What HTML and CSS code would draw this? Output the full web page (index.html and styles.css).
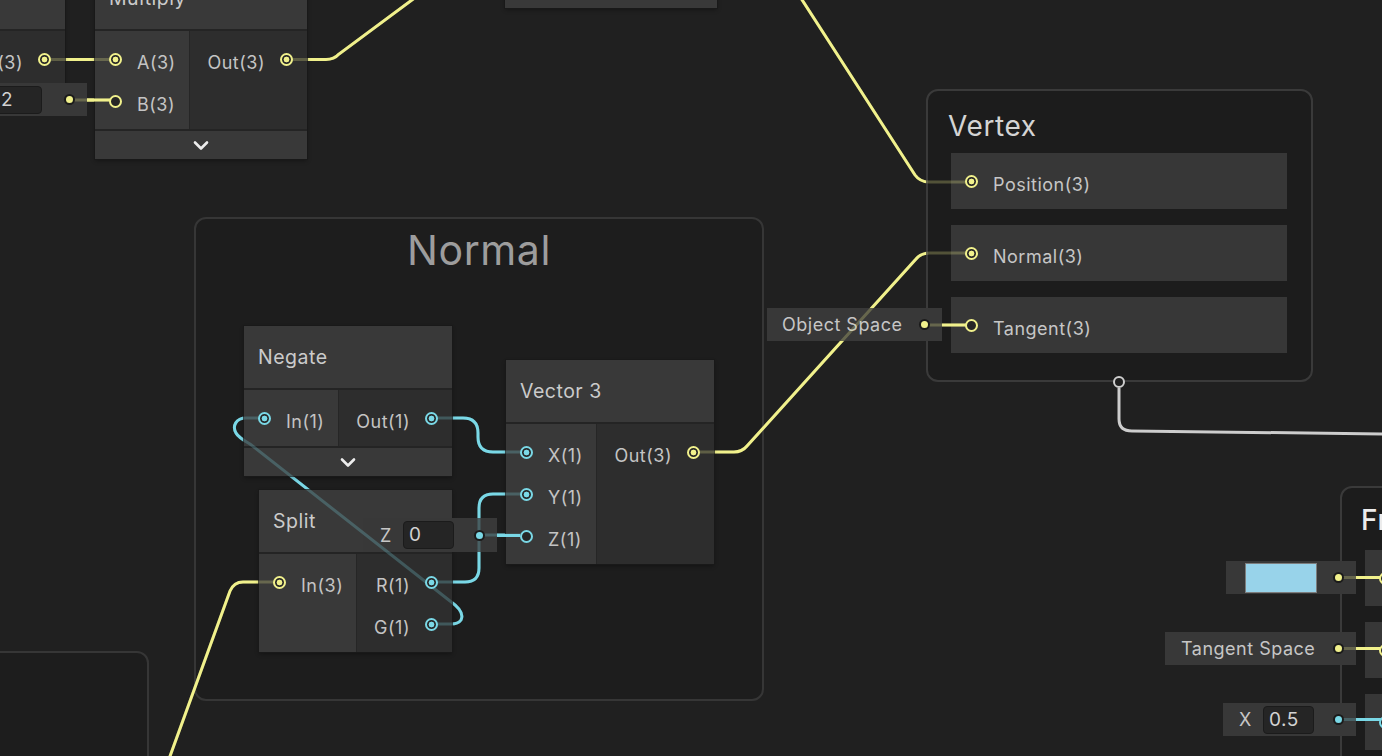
FILE: index.html
```html
<!DOCTYPE html>
<html>
<head>
<meta charset="utf-8">
<title>Shader Graph</title>
<link rel="stylesheet" href="styles.css">
</head>
<body>
<div class="graph">
  <div class="group g-normal"><div class="group-title">Normal</div></div>
  <div class="group g-bl"></div>

  <div class="context c-frag">
    <div class="ctx-title ctx-title-bright">Fragment</div>
    <div class="ctx-slot"><span class="port y on"></span></div>
    <div class="ctx-slot"><span class="port y on"></span></div>
    <div class="ctx-slot"><span class="port c on"></span></div>
  </div>

  <svg class="edges under" width="1382" height="756" viewBox="0 0 1382 756">
    <defs>
      <path id="p1" d="M44,59.5 H116"/>
      <path id="p2" d="M286,59.5 H326 Q334,59.5 339,54 L420,-6"/>
      <path id="p3" d="M797,-8 L915,175 Q920,182 929,182 H972"/>
      <path id="p4" d="M692,452 H734 Q742,452 747,446 L916,259 Q921,253 930,253 H972"/>
      <path id="p5" d="M925,325 H972"/>
      <path id="p6" d="M431,418 H463 Q478,418 478,433 V437 Q478,452 493,452 H526"/>
      <path id="p7" d="M431,582 H465 Q479,582 479,568 V508 Q479,494 493,494 H526"/>
      <path id="p8" d="M479,535 H526"/>
      <path id="p9" d="M264,418 H246 C236,418 232,426 236,433 C238,437 243,440 250,444 L450,601 C460,608 464,614 461,620 C459,623 456,624 451,624 H431"/>
      <path id="p10" d="M279,582 H243 Q234,582 230,591 L165,770"/>
      <path id="p11" d="M1119,388 V419 Q1119,431 1132,431 L1390,434"/>
      <path id="p12" d="M1339,577.5 H1386"/>
      <path id="p13" d="M1339,648.5 H1386"/>
      <path id="p14" d="M1339,719.5 H1386"/>
      <path id="p15" d="M68,100 H116"/>
    </defs>
    <g class="shadow">
      <use href="#p2"/><use href="#p3"/><use href="#p4"/><use href="#p6"/><use href="#p7"/>
      <use href="#p9"/><use href="#p10"/><use href="#p11"/>
    </g>
    <g class="ey"><use href="#p1"/><use href="#p2"/><use href="#p3"/><use href="#p4"/><use href="#p5"/><use href="#p10"/><use href="#p12"/><use href="#p13"/><use href="#p15"/></g>
    <g class="ec"><use href="#p6"/><use href="#p7"/><use href="#p8"/><use href="#p9"/><use href="#p14"/></g>
    <g class="eg"><use href="#p11"/></g>
  </svg>

  <div class="node n-left">
    <div class="node-title"></div>
    <div class="node-body">
      <div class="col-in"></div>
      <div class="col-out">
        <div class="slot"><span class="lbl">Out(3)</span><span class="port y on"></span></div>
      </div>
    </div>
  </div>

  <div class="node n-mult">
    <div class="node-title">Multiply</div>
    <div class="node-body">
      <div class="col-in">
        <div class="slot"><span class="port y on"></span><span class="lbl">A(3)</span></div>
        <div class="slot"><span class="port y hollow"></span><span class="lbl">B(3)</span></div>
      </div>
      <div class="col-out">
        <div class="slot"><span class="lbl">Out(3)</span><span class="port y on"></span></div>
      </div>
    </div>
    <div class="collapse"><svg width="18" height="11" viewBox="0 0 18 11"><path d="M3,2.5 L9,8.5 L15,2.5" class="chev"/></svg></div>
  </div>

  <div class="node n-top"></div>

  <div class="node n-negate">
    <div class="node-title">Negate</div>
    <div class="node-body">
      <div class="col-in">
        <div class="slot"><span class="port c on"></span><span class="lbl">In(1)</span></div>
      </div>
      <div class="col-out">
        <div class="slot"><span class="lbl">Out(1)</span><span class="port c on"></span></div>
      </div>
    </div>
    <div class="collapse"><svg width="18" height="11" viewBox="0 0 18 11"><path d="M3,2.5 L9,8.5 L15,2.5" class="chev"/></svg></div>
  </div>

  <div class="node n-vec3">
    <div class="node-title">Vector 3</div>
    <div class="node-body">
      <div class="col-in">
        <div class="slot"><span class="port c on"></span><span class="lbl">X(1)</span></div>
        <div class="slot"><span class="port c on"></span><span class="lbl">Y(1)</span></div>
        <div class="slot"><span class="port c hollow"></span><span class="lbl">Z(1)</span></div>
      </div>
      <div class="col-out">
        <div class="slot"><span class="lbl">Out(3)</span><span class="port y on"></span></div>
      </div>
    </div>
  </div>

  <div class="node n-split">
    <div class="node-title">Split</div>
    <div class="node-body">
      <div class="col-in">
        <div class="slot"><span class="port y on"></span><span class="lbl">In(3)</span></div>
      </div>
      <div class="col-out">
        <div class="slot"><span class="lbl">R(1)</span><span class="port c on"></span></div>
        <div class="slot"><span class="lbl">G(1)</span><span class="port c on"></span></div>
      </div>
    </div>
  </div>

  <div class="context c-vertex">
    <div class="ctx-title">Vertex</div>
    <div class="ctx-slot"><span class="port y on"></span><span class="lbl">Position(3)</span></div>
    <div class="ctx-slot"><span class="port y on"></span><span class="lbl">Normal(3)</span></div>
    <div class="ctx-slot"><span class="port y hollow"></span><span class="lbl">Tangent(3)</span></div>
  </div>
  <div class="vport"></div>

  <div class="field f-two"><span class="num num-two">2</span><span class="dot y"></span></div>
  <div class="field f-obj"><span>Object Space</span><span class="dot y"></span></div>
  <div class="field f-z"><span class="flabel">Z</span><span class="num">0</span><span class="dot c"></span></div>
  <div class="field f-color"><span class="swatch"></span><span class="dot y"></span></div>
  <div class="field f-tan"><span>Tangent Space</span><span class="dot y"></span></div>
  <div class="field f-x"><span class="flabel">X</span><span class="num">0.5</span><span class="dot c"></span></div>

  <svg class="edges over" width="1382" height="756" viewBox="0 0 1382 756">
    <g class="dim">
      <g class="ey"><use href="#p1"/><use href="#p2"/><use href="#p3"/><use href="#p4"/><use href="#p5"/><use href="#p10"/><use href="#p12"/><use href="#p13"/><use href="#p15"/></g>
      <g class="ec"><use href="#p6"/><use href="#p7"/><use href="#p8"/><use href="#p9"/><use href="#p14"/></g>
    </g>
    <g class="ey"><path d="M87,100 H110"/><path d="M942,325 H966"/></g>
    <g class="ec"><path d="M497,535.5 H520"/></g>
  </svg>
</div>
</body>
</html>
```

FILE: styles.css
```css
* { box-sizing: border-box; }

body {
  margin: 0;
  background: #202020;
  font-family: Inter, "Noto Sans", "Liberation Sans", sans-serif;
}

.graph {
  position: relative;
  width: 1382px;
  height: 756px;
  overflow: hidden;
  background: #202020;
}

.y { --c: #f1f18c; }
.c { --c: #7ad8e6; }

/* groups */
.group {
  position: absolute;
  border: 2px solid #363636;
  border-radius: 12px;
  background: #1d1d1d;
}
.g-normal { left: 194px; top: 217px; width: 570px; height: 484px; }
.g-bl { left: -30px; top: 651px; width: 179px; height: 200px; }
.group-title {
  margin-top: 7px;
  text-align: center;
  font-size: 41px;
  letter-spacing: 0.6px;
  line-height: 48px;
  color: #9d9d9d;
}

/* context blocks */
.context {
  position: absolute;
  border: 2px solid #3a3a3a;
  border-radius: 12px;
  background: #1c1c1c;
}
.c-vertex { left: 926px; top: 89px; width: 387px; height: 293px; }
.c-frag { left: 1340px; top: 486px; width: 420px; height: 320px; }
.ctx-title {
  height: 62px;
  padding: 19px 0 0 20px;
  font-size: 28px;
  letter-spacing: 0.6px;
  line-height: 32px;
  color: #d4d4d4;
  white-space: nowrap;
}
.ctx-title-bright { color: #ececec; font-weight: 500; padding-top: 16px; padding-left: 19px; }
.ctx-slot {
  height: 56px;
  margin: 0 24px 16px 23px;
  background: #373737;
  display: flex;
  align-items: center;
  gap: 15px;
  padding-left: 14px;
  font-size: 18px;
  letter-spacing: 0.5px;
  color: #c6c6c6;
  white-space: nowrap;
}
.vport {
  position: absolute;
  left: 1113px;
  top: 376px;
  width: 12px;
  height: 12px;
  border: 2px solid #cfcfcf;
  border-radius: 50%;
  background: #202020;
  z-index: 4;
}

/* nodes */
.node {
  position: absolute;
  background: #242424;
  box-shadow: 0 0 0 1px #191919, 0 2px 4px rgba(0, 0, 0, 0.35);
  display: flex;
  flex-direction: column;
}
.node-title {
  height: 62px;
  margin-bottom: 2px;
  background: #393939;
  display: flex;
  align-items: center;
  padding-left: 14px;
  font-size: 19.5px;
  letter-spacing: 0.5px;
  color: #cbcbcb;
  white-space: nowrap;
}
.node-body { display: flex; }
.col-in {
  background: #393939;
  padding: 7px 0;
  border-right: 1px solid #262626;
}
.col-out {
  flex: 1;
  background: #2d2d2d;
  padding: 7px 0;
}
.slot {
  height: 42px;
  display: flex;
  align-items: center;
  gap: 15px;
  font-size: 18px;
  letter-spacing: 0.5px;
  color: #c4c4c4;
  white-space: nowrap;
}
.lbl { position: relative; top: 3px; }
.col-in .slot { padding-left: 14px; }
.col-out .slot { justify-content: flex-end; padding-right: 14px; }
.collapse {
  height: 28px;
  margin-top: 2px;
  background: #393939;
  display: flex;
  align-items: center;
  justify-content: center;
}
.chev {
  fill: none;
  stroke: #ededed;
  stroke-width: 2.6;
  stroke-linecap: round;
  stroke-linejoin: round;
}

.n-left { left: -150px; top: -33px; width: 215px; }
.n-left .col-in { width: 80px; }
.n-mult { left: 95px; top: -33px; width: 212px; }
.n-mult .col-in { width: 95px; }
.n-top { left: 505px; top: -60px; width: 212px; height: 68px; background: #393939; }
.n-negate { left: 244px; top: 326px; width: 208px; }
.n-negate .col-in { width: 95px; }
.n-vec3 { left: 506px; top: 360px; width: 208px; }
.n-vec3 .col-in { width: 91px; }
.n-split { left: 259px; top: 490px; width: 193px; }
.n-split .col-in { width: 98px; }

/* ports */
.port {
  flex: none;
  width: 13px;
  height: 13px;
  border-radius: 50%;
  border: 2px solid var(--c);
  background: radial-gradient(circle, var(--c) 0 2.6px, #262626 3.2px);
  position: relative;
  z-index: 4;
}
.port.hollow { background: #262626; }

/* inline fields */
.field {
  position: absolute;
  height: 33px;
  background: #383838;
  display: flex;
  align-items: center;
  padding-right: 14px;
  font-size: 18px;
  letter-spacing: 0.5px;
  color: #c6c6c6;
  white-space: nowrap;
}
.dot {
  flex: none;
  margin-left: auto;
  width: 7px;
  height: 7px;
  border-radius: 50%;
  background: var(--c);
  box-shadow: 0 0 0 2px #1b1b1b;
  position: relative;
  z-index: 4;
}
.num {
  width: 51px;
  height: 28px;
  background: #252525;
  border: 1px solid #1b1b1b;
  border-radius: 4px;
  padding-left: 5px;
  line-height: 26px;
  font-size: 19px;
  color: #d2d2d2;
}
.num-two { width: 47px; }
.flabel { width: 23px; }
.swatch {
  width: 72px;
  height: 30px;
  background: #98d3ea;
  border: 1px solid #7d7d7d;
}

.f-two { left: -9px; top: 83px; width: 96px; padding-left: 4px; }
.f-obj { left: 767px; top: 308px; width: 175px; padding-left: 15px; }
.f-z { left: 363px; top: 518px; width: 134px; height: 34px; padding-left: 17px; }
.f-color { left: 1226px; top: 561px; width: 130px; padding-left: 19px; }
.f-tan { left: 1165px; top: 632px; width: 191px; padding-left: 16px; }
.f-x { left: 1223px; top: 703px; width: 133px; padding-left: 16px; }
.f-x .flabel { width: 24px; }

/* edges */
.edges {
  position: absolute;
  left: 0;
  top: 0;
  overflow: visible;
  pointer-events: none;
}
.edges.over { z-index: 3; }
.edges use, .edges path { fill: none; stroke-width: 3; }
.shadow { stroke: #121212; stroke-width: 5; opacity: 0.5; }
.shadow use { stroke-width: 5; }
.ey { stroke: #f1f18c; }
.ec { stroke: #7ad8e6; }
.eg { stroke: #cdcdcd; }
.dim { opacity: 0.25; }
```
